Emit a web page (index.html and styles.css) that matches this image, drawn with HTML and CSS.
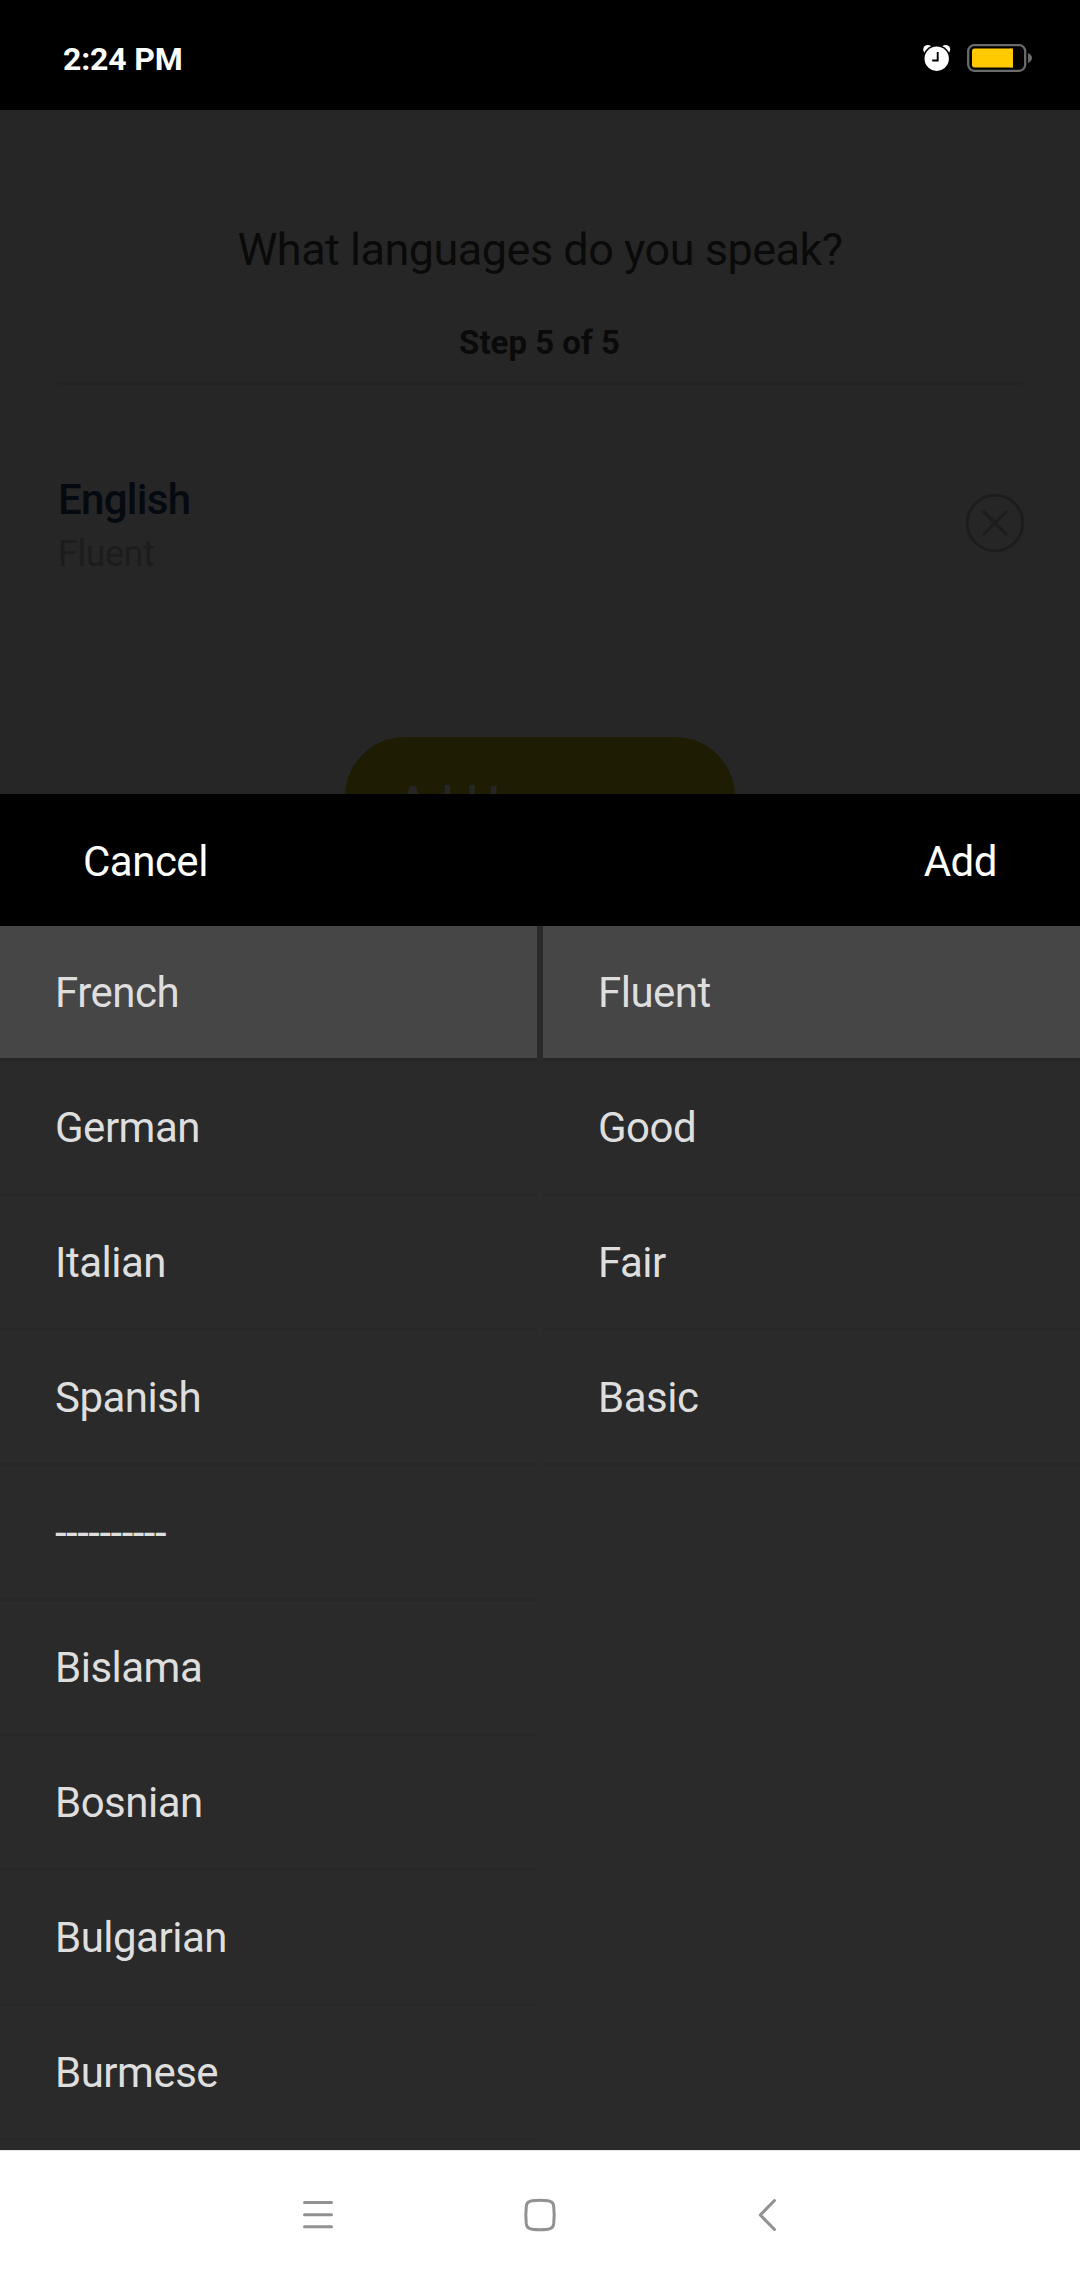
FILE: index.html
```html
<!DOCTYPE html>
<html lang="en">
<head>
<meta charset="utf-8">
<title>What languages do you speak?</title>
<link rel="stylesheet" href="styles.css">
</head>
<body>
<div class="screen">
  <header class="status">
    <span class="time">2:24 PM</span>
    <div class="status-icons">
      <svg width="30" height="30" viewBox="0 0 30 30">
        <circle cx="5.8" cy="6.6" r="4.6" fill="#fff"/>
        <circle cx="23.6" cy="6.6" r="4.6" fill="#fff"/>
        <circle cx="14.700" cy="15.700" r="13.8" fill="#000"/>
        <circle cx="14.700" cy="15.700" r="12.2" fill="#fff"/>
        <path d="M15.700 9v8.500h-5.500" fill="none" stroke="#000" stroke-width="1.900"/>
      </svg>
      <svg class="battery" width="66" height="28" viewBox="0 0 66 28">
        <rect x="1.200" y="1.200" width="57" height="25.600" rx="6" fill="none" stroke="#6b6b6b" stroke-width="2.300"/>
        <rect x="5" y="4.500" width="41" height="19" rx="2.500" fill="#ffcb00"/>
        <path d="M43 4.500h3v19h-3z" fill="#ffcb00"/>
        <path d="M61 9q4 2 4 5t-4 5z" fill="#6b6b6b"/>
      </svg>
    </div>
  </header>

  <main class="page">
    <h1 class="title">What languages do you speak?</h1>
    <p class="step">Step 5 of 5</p>
    <section class="entry">
      <div>
        <div class="entry-name">English</div>
        <div class="entry-level">Fluent</div>
      </div>
      <svg class="remove" width="60" height="60" viewBox="0 0 60 60" fill="none" stroke="#1c1c1c" stroke-width="2.600">
        <circle cx="30" cy="30" r="27.700"/>
        <path d="M18 18l24 24M42 18L18 42" stroke-width="3"/>
      </svg>
    </section>
    <div class="add-language">Add Language</div>
  </main>

  <div class="toolbar">
    <span>Cancel</span>
    <span>Add</span>
  </div>

  <div class="picker">
    <ul class="column">
      <li class="selected">French</li>
      <li>German</li>
      <li>Italian</li>
      <li>Spanish</li>
      <li>----------</li>
      <li>Bislama</li>
      <li>Bosnian</li>
      <li>Bulgarian</li>
      <li>Burmese</li>
    </ul>
    <ul class="column">
      <li class="selected">Fluent</li>
      <li>Good</li>
      <li>Fair</li>
      <li>Basic</li>
    </ul>
  </div>

  <nav class="navbar">
    <svg viewBox="0 0 40 40"><path d="M6.500 7.500h27M6.500 19.700h27M6.500 31.700h27"/></svg>
    <svg viewBox="0 0 40 40"><path d="M12 5.800Q20 4.800 28 5.800Q33 6.300 33.700 11Q34.700 20 33.700 29Q33 33.700 28 34.200Q20 35.200 12 34.200Q7 33.700 6.300 29Q5.300 20 6.300 11Q7 6.300 12 5.800z"/></svg>
    <svg viewBox="0 0 40 40"><path d="M32.500 5.500L18.300 20L32.500 34.500"/></svg>
  </nav>
</div>
</body>
</html>
```
FILE: styles.css
```css
* { box-sizing: border-box; }

body {
  margin: 0;
  background: #2a2a2a;
  font-family: Roboto, "Liberation Sans", sans-serif;
}

.screen {
  display: flex;
  flex-direction: column;
  width: 1080px;
  height: 2280px;
}

.status {
  flex: 0 0 110px;
  display: flex;
  justify-content: space-between;
  padding: 39px 47px 0 63px;
  background: #000;
}

.time {
  color: #fff;
  font-size: 32px;
  font-weight: 700;
  letter-spacing: -0.15px;
  line-height: 40px;
}

.status-icons {
  display: flex;
  align-items: flex-start;
  gap: 15px;
  padding-top: 4px;
}

.battery { margin-top: 1px; }

.page {
  flex: 0 0 684px;
  overflow: hidden;
  padding: 113px 58px 0;
  background: #262626;
  letter-spacing: -0.5px;
}

.title,
.step {
  margin: 0;
  color: #0a0a0a;
  text-align: center;
}

.title {
  font-size: 45px;
  font-weight: 400;
  line-height: 54px;
}

.step {
  margin-top: 46px;
  padding-right: 1px;
  padding-bottom: 19px;
  border-bottom: 3px solid #232323;
  font-size: 33px;
  font-weight: 700;
  letter-spacing: 0;
  line-height: 40px;
}

.entry {
  display: flex;
  justify-content: space-between;
  align-items: center;
  height: 101px;
  margin-top: 90px;
}

.remove { margin: -6px -3px 0 0; }

.entry-name {
  color: #050910;
  font-size: 42px;
  font-weight: 500;
  letter-spacing: -0.7px;
  line-height: 50px;
}

.entry-level {
  margin-top: 7px;
  color: #1c1c1c;
  font-size: 36px;
  line-height: 44px;
}

.add-language {
  width: 390px;
  height: 132px;
  margin: 161px auto 0;
  border-radius: 60px;
  background: #1f1c04;
  color: #262626;
  font-size: 45px;
  font-weight: 500;
  line-height: 132px;
  text-align: center;
}

.toolbar {
  flex: 0 0 132px;
  display: flex;
  justify-content: space-between;
  padding: 3px 83px 0;
  background: #000;
  color: #fff;
  font-size: 42px;
  letter-spacing: -0.5px;
  line-height: 129px;
}

.picker {
  flex: 0 0 1224px;
  display: grid;
  grid-template-columns: 1fr 1fr;
  column-gap: 6px;
  background: #2a2a2a;
}

.column {
  margin: 0;
  padding: 0;
  list-style: none;
}

.column li {
  height: 135px;
  padding-left: 55px;
  border-bottom: 3px solid #272727;
  color: #dedede;
  font-size: 42px;
  letter-spacing: -0.5px;
  line-height: 134px;
}

.column .selected { background: #464646; }

.navbar {
  flex: 0 0 130px;
  display: grid;
  grid-template-columns: repeat(3, 40px);
  justify-content: center;
  column-gap: 182px;
  padding-top: 44px;
  border-top: 1px solid #e5e5e5;
  background: #fff;
}

.navbar svg {
  width: 40px;
  height: 40px;
  fill: none;
  stroke: #919191;
  stroke-width: 3;
  stroke-linecap: round;
  stroke-linejoin: round;
}
```
